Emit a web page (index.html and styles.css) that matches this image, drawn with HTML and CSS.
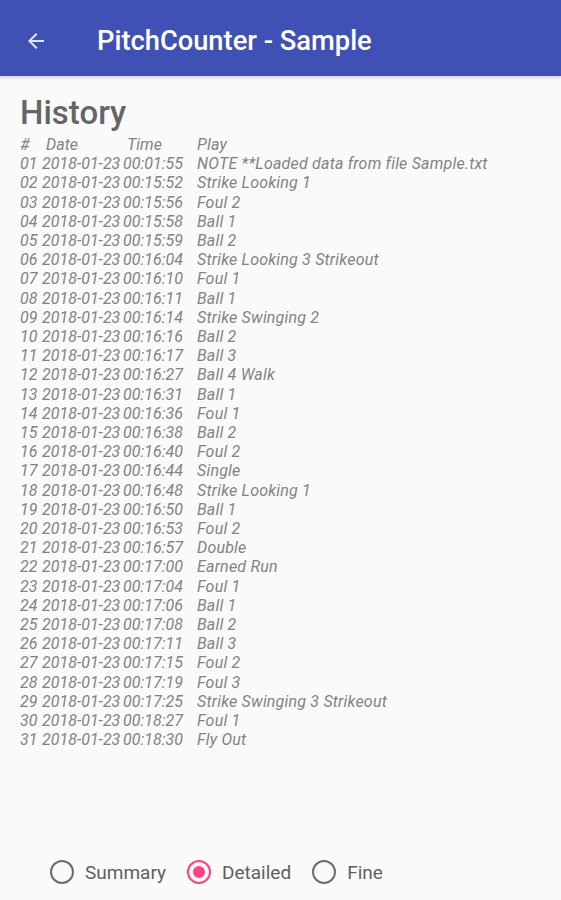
FILE: index.html
```html
<!DOCTYPE html>
<html>
<head>
<meta charset="utf-8">
<link rel="stylesheet" href="styles.css">
</head>
<body>
<div class="app">
  <header class="appbar">
    <svg class="back" width="24" height="24" viewBox="0 0 24 24"><path d="M20 11H7.83l5.59-5.59L12 4l-8 8 8 8 1.41-1.41L7.83 13H20v-2z" fill="#fff" fill-opacity="0.85"/></svg>
    <div class="title">PitchCounter - Sample</div>
  </header>
  <main class="content">
    <h1 class="heading">History</h1>
    <div class="table" id="table">
      <span class="c-num hd">#</span><span class="c-date hd">Date</span><span class="c-time hd">Time</span><span class="c-play hd">Play</span>
    </div>
  </main>
  <footer class="radios">
    <label class="radio"><span class="circle"></span><span>Summary</span></label>
    <label class="radio"><span class="circle on"></span><span>Detailed</span></label>
    <label class="radio"><span class="circle"></span><span>Fine</span></label>
  </footer>
</div>
<script>
var rows=[["01","00:01:55","NOTE **Loaded data from file Sample.txt"],["02","00:15:52","Strike Looking 1"],["03","00:15:56","Foul 2"],["04","00:15:58","Ball 1"],["05","00:15:59","Ball 2"],["06","00:16:04","Strike Looking 3 Strikeout"],["07","00:16:10","Foul 1"],["08","00:16:11","Ball 1"],["09","00:16:14","Strike Swinging 2"],["10","00:16:16","Ball 2"],["11","00:16:17","Ball 3"],["12","00:16:27","Ball 4 Walk"],["13","00:16:31","Ball 1"],["14","00:16:36","Foul 1"],["15","00:16:38","Ball 2"],["16","00:16:40","Foul 2"],["17","00:16:44","Single"],["18","00:16:48","Strike Looking 1"],["19","00:16:50","Ball 1"],["20","00:16:53","Foul 2"],["21","00:16:57","Double"],["22","00:17:00","Earned Run"],["23","00:17:04","Foul 1"],["24","00:17:06","Ball 1"],["25","00:17:08","Ball 2"],["26","00:17:11","Ball 3"],["27","00:17:15","Foul 2"],["28","00:17:19","Foul 3"],["29","00:17:25","Strike Swinging 3 Strikeout"],["30","00:18:27","Foul 1"],["31","00:18:30","Fly Out"]];
var t=document.getElementById("table");
rows.forEach(function(r){
  var a=[["c-num",r[0]],["c-date","2018-01-23"],["c-time",r[1]],["c-play",r[2]]];
  a.forEach(function(c){var s=document.createElement("span");s.className=c[0];s.textContent=c[1];t.appendChild(s);});
});
</script>
</body>
</html>
```
FILE: styles.css
```css
html, body {
  margin: 0;
  padding: 0;
  background: #fafafa;
}
body {
  font-family: Roboto, "Liberation Sans", sans-serif;
}
.app {
  width: 561px;
  height: 900px;
  display: flex;
  flex-direction: column;
}
.appbar {
  height: 76px;
  box-sizing: border-box;
  padding-top: 6px;
  flex: none;
  background: #3f51b5;
  display: flex;
  align-items: center;
  box-shadow: 0 2px 3px rgba(0,0,0,0.15);
}
.back {
  margin-left: 24px;
  width: 24px;
  height: 24px;
}
.title {
  margin-left: 49px;
  color: #fff;
  font-size: 27.3px;
  font-weight: 500;
}
.content {
  flex: 1;
  padding: 0 0 0 20px;
}
.heading {
  margin: 19px 0 0 0;
  font-size: 33px;
  font-weight: 500;
  color: #666;
  line-height: 36px;
}
.table {
  margin-top: 4px;
  display: grid;
  grid-template-columns: 22px 81px 74px auto;
  font-style: italic;
  font-size: 16px;
  line-height: 19.2px;
  color: #838383;
  white-space: nowrap;
}
.c-play { letter-spacing: 0.2px; }
.hd.c-date { padding-left: 4px; }
.hd.c-time { padding-left: 4px; }
.radios {
  height: 56px;
  flex: none;
  display: flex;
  align-items: center;
  padding-left: 50px;
  gap: 21px;
}
.radio {
  display: flex;
  align-items: center;
  gap: 11px;
  font-size: 19px;
  color: #5f5f5f;
}
.circle {
  width: 24px;
  height: 24px;
  border: 2px solid #6d6d6d;
  border-radius: 50%;
  box-sizing: border-box;
  position: relative;
}
.circle.on {
  border-color: #ff4081;
}
.circle.on::after {
  content: "";
  position: absolute;
  left: 4px;
  top: 4px;
  width: 12px;
  height: 12px;
  border-radius: 50%;
  background: #ff4081;
}
```
